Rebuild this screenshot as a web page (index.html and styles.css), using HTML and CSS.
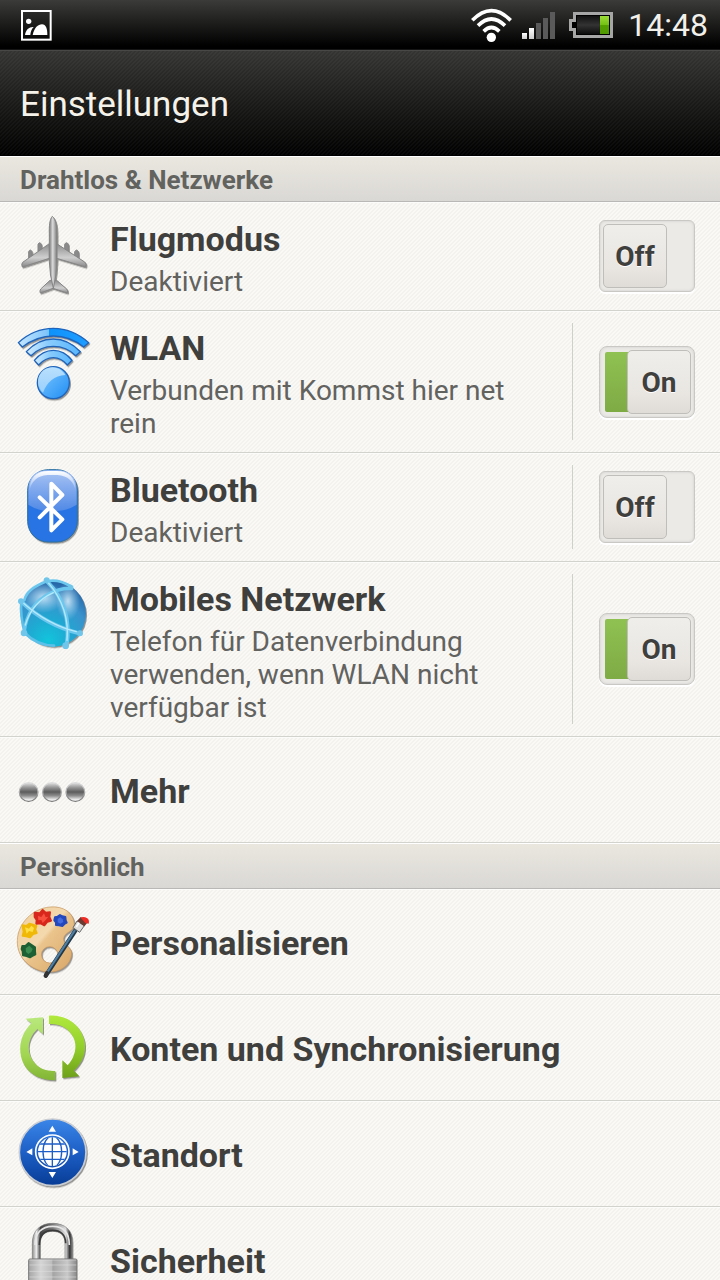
FILE: index.html
```html
<!DOCTYPE html>
<html lang="de">
<head>
  <meta charset="UTF-8">
  <meta name="viewport" content="width=device-width, initial-scale=1.0">
  <title>Einstellungen</title>
  <link rel="stylesheet" href="styles.css">
</head>
<body>
  <div class="status-bar">
    <svg class="status-picture" viewBox="0 0 96 96" aria-hidden="true">
      <rect x="6" y="6" width="86" height="86" fill="none" stroke="#fff" stroke-width="6"/>
      <circle cx="26" cy="37" r="8" fill="#fff"/>
      <path d="M15 78C17 62 28 53 41 54C34 61 32 69 31 78Z" fill="#fff"/>
      <path d="M38 78C43 56 54 46 66 46C78 47 82 58 82 78Z" fill="#fff"/>
    </svg>
    <div class="status-icons">
      <svg class="status-wifi" viewBox="30 24 132 108" aria-hidden="true">
        <g fill="none" stroke="#fff" stroke-width="11">
          <path d="M37 64Q94 6 152 64"/>
          <path d="M54 80Q94 40 135 80"/>
          <path d="M71 97Q94 74 118 97"/>
        </g>
        <circle cx="94" cy="115" r="14" fill="#fff"/>
      </svg>
      <svg class="status-signal" viewBox="186 36 99 90" aria-hidden="true">
        <defs>
          <linearGradient id="bar-on" x1="0" y1="0" x2="0" y2="1">
            <stop offset="0" stop-color="#fff"/>
            <stop offset="1" stop-color="#ccc"/>
          </linearGradient>
        </defs>
        <rect x="186" y="105" width="15" height="18" fill="url(#bar-on)"/>
        <rect x="207" y="90" width="15" height="33" fill="url(#bar-on)"/>
        <path d="M228 75h15v48h-15zM249 60h15v63h-15zM270 42h15v81h-15z" fill="#5a5a5a"/>
      </svg>
      <svg class="status-battery" viewBox="327 36 132 84" aria-hidden="true">
        <defs>
          <linearGradient id="battery-body" x1="0" y1="0" x2="0" y2="1">
            <stop offset="0" stop-color="#111"/>
            <stop offset=".5" stop-color="#333"/>
            <stop offset="1" stop-color="#0c0c0c"/>
          </linearGradient>
          <linearGradient id="battery-charge" x1="0" y1="0" x2="0" y2="1">
            <stop offset="0" stop-color="#9bdc38"/>
            <stop offset=".5" stop-color="#74c013"/>
            <stop offset=".5" stop-color="#55a100"/>
            <stop offset="1" stop-color="#4f9900"/>
          </linearGradient>
        </defs>
        <path d="M339 39H459V117H339V96H327V60H339Z" fill="#a6a6a6"/>
        <path d="M348 48H450V108H348V87H336V69H348Z" fill="#000"/>
        <rect x="351" y="51" width="69" height="54" fill="url(#battery-body)"/>
        <rect x="420" y="51" width="27" height="54" fill="url(#battery-charge)"/>
      </svg>
      <time class="clock">14:48</time>
    </div>
  </div>

  <header class="title-bar">
    <h1>Einstellungen</h1>
  </header>

  <main class="settings">
    <section>
      <h2 class="section-title">Drahtlos &amp; Netzwerke</h2>
      <ul class="list">
        <li class="row">
          <svg class="icon" viewBox="0 -9 330 315" aria-hidden="true">
            <defs>
              <linearGradient id="plane-body">
                <stop offset="0" stop-color="#777"/>
                <stop offset=".45" stop-color="#dcdcdc"/>
                <stop offset="1" stop-color="#777"/>
              </linearGradient>
              <linearGradient id="plane-wing" x1="0" y1="0" x2="0" y2="1">
                <stop offset="0" stop-color="#8c8c8c"/>
                <stop offset=".6" stop-color="#cfcfcf"/>
                <stop offset="1" stop-color="#888"/>
              </linearGradient>
            </defs>
            <g class="icon-shadow" stroke="#858585" stroke-width="3" stroke-linejoin="round">
              <path d="M86 160v-20q5-10 10 0v16zM114 140v-22q5-10 10 0v18zM194 136v-18q6-10 11 0v22zM224 156v-16q6-10 11 0v20z" fill="#8b8b8b"/>
              <path d="M148 116L68 172Q63 177 67 186L148 160ZM170 116L254 171Q261 176 257 186L170 160Z" fill="url(#plane-wing)"/>
              <path d="M150 226L122 252Q118 258 121 264L159 250L202 264Q205 257 200 252L170 226Z" fill="url(#plane-wing)"/>
              <path d="M157 34C168 44 171 62 171 90V170Q170 210 160 250Q149 210 148 170V90C147 62 149 43 157 34Z" fill="url(#plane-body)"/>
            </g>
          </svg>
          <a class="row-text" href="#flugmodus">
            <span class="row-title">Flugmodus</span>
            <span class="row-detail">Deaktiviert</span>
          </a>
          <div class="row-switch">
            <label class="switch">
              <input type="checkbox" role="switch" aria-label="Flugmodus">
              <span class="knob">Off</span>
            </label>
          </div>
        </li>

        <li class="row">
          <svg class="icon" viewBox="0 -12 330 315" aria-hidden="true">
            <defs>
              <linearGradient id="wlan-arc">
                <stop offset="0" stop-color="#c4e6ff"/>
                <stop offset=".43" stop-color="#7cc4fb"/>
                <stop offset=".43" stop-color="#0d92fb"/>
                <stop offset="1" stop-color="#1f9dff"/>
              </linearGradient>
              <linearGradient id="wlan-arc-light">
                <stop offset="0" stop-color="#d3ecff"/>
                <stop offset=".4" stop-color="#8accfc"/>
                <stop offset="1" stop-color="#58b6fc"/>
              </linearGradient>
              <linearGradient id="wlan-ball" x1="0" y1="0" x2="1" y2="1">
                <stop offset="0" stop-color="#8ccbfc"/>
                <stop offset=".4" stop-color="#5cb3fb"/>
                <stop offset="1" stop-color="#1f8df4"/>
              </linearGradient>
              <linearGradient id="wlan-gloss" x1="0" y1="0" x2="0" y2="1">
                <stop offset="0" stop-color="#b9dffd"/>
                <stop offset="1" stop-color="#9bd0fc"/>
              </linearGradient>
            </defs>
            <g class="icon-shadow" stroke="#1f64bb" stroke-width="4" stroke-linejoin="round">
              <path d="M55 83Q102 40 160 40Q218 40 266 83L251 96Q210 63 160 63Q111 63 67 96Z" fill="url(#wlan-arc)"/>
              <path d="M79 110Q114 72 160 72Q205 72 241 110L227 122Q200 94 160 94Q121 94 93 122Z" fill="url(#wlan-arc-light)"/>
              <path d="M103 136Q128 106 160 106Q193 106 216 136L202 150Q184 128 160 128Q136 128 116 150Z" fill="url(#wlan-arc-light)"/>
              <circle cx="160" cy="203" r="48" fill="url(#wlan-ball)"/>
            </g>
            <path d="M119 220A42 42 0 0 1 196 180Q147 184 129 233Q122 228 119 220Z" fill="url(#wlan-gloss)"/>
          </svg>
          <a class="row-text" href="#wlan">
            <span class="row-title">WLAN</span>
            <span class="row-detail">Verbunden mit Kommst hier net rein</span>
          </a>
          <div class="row-switch divided">
            <label class="switch">
              <input type="checkbox" role="switch" aria-label="WLAN" checked>
              <span class="knob">On</span>
            </label>
          </div>
        </li>

        <li class="row">
          <svg class="icon" viewBox="0 -21 330 315" aria-hidden="true">
            <defs>
              <linearGradient id="bt-gloss" x1="0" y1="0" x2="0" y2="1">
                <stop offset="0" stop-color="#a9c4f4"/>
                <stop offset="1" stop-color="#5089e6"/>
              </linearGradient>
              <linearGradient id="bt-rim" x1="0" y1="0" x2="0" y2="1">
                <stop offset="0" stop-color="#fff"/>
                <stop offset="1" stop-color="#fff" stop-opacity="0"/>
              </linearGradient>
            </defs>
            <rect class="icon-shadow" x="83" y="29" width="149" height="217" rx="62" fill="#2874e4" stroke="#2b6f9f" stroke-width="3"/>
            <path d="M85 90Q85 31 144 31H171Q230 31 230 90V134Q200 154 157 154Q115 154 85 134Z" fill="url(#bt-gloss)"/>
            <path d="M88 95Q88 33 145 33H170Q227 33 227 95Q219 48 172 45H143Q96 48 88 95Z" fill="url(#bt-rim)"/>
            <path d="M119 112L187 178L154 211V71L187 105L119 172" fill="none" stroke="#fff" stroke-width="12" stroke-linecap="round" stroke-linejoin="round"/>
          </svg>
          <a class="row-text" href="#bluetooth">
            <span class="row-title">Bluetooth</span>
            <span class="row-detail">Deaktiviert</span>
          </a>
          <div class="row-switch divided">
            <label class="switch">
              <input type="checkbox" role="switch" aria-label="Bluetooth">
              <span class="knob">Off</span>
            </label>
          </div>
        </li>

        <li class="row">
          <svg class="icon" viewBox="0 -9 330 315" aria-hidden="true">
            <defs>
              <radialGradient id="globe-fill" cx=".42" cy=".9" r=".9">
                <stop offset="0" stop-color="#12c4dc"/>
                <stop offset=".35" stop-color="#1fa9d2"/>
                <stop offset=".7" stop-color="#3a92cc"/>
                <stop offset="1" stop-color="#2563a5"/>
              </radialGradient>
              <radialGradient id="globe-gloss">
                <stop offset="0" stop-color="#e4f4fd"/>
                <stop offset="1" stop-color="#b4dff5" stop-opacity="0"/>
              </radialGradient>
            </defs>
            <circle class="icon-shadow" cx="160" cy="147" r="98" fill="url(#globe-fill)"/>
            <ellipse cx="130" cy="98" rx="62" ry="46" fill="url(#globe-gloss)" opacity=".8"/>
            <ellipse cx="204" cy="108" rx="36" ry="58" fill="url(#globe-gloss)" opacity=".8"/>
            <g fill="none" stroke="#6cc7ee" stroke-linecap="round">
              <path d="M73 106Q80 72 140 49Q175 41 211 63" stroke-width="8"/>
              <path d="M64 110Q60 150 74 204Q112 242 162 242" stroke-width="8" stroke="#5cc0e8"/>
              <path d="M72 204Q82 118 151 85Q183 68 215 71" stroke-width="10"/>
              <path d="M141 49Q217 125 200 240" stroke-width="12"/>
              <path d="M65 111Q139 181 238 205" stroke-width="12"/>
            </g>
            <g fill="none" stroke="#b6eafb" stroke-width="4" stroke-linecap="round">
              <path d="M144 52Q210 129 201 226"/>
              <path d="M69 113Q142 178 229 200"/>
              <path d="M76 180Q96 112 160 83"/>
            </g>
            <g fill="#6fc6ea">
              <circle cx="140" cy="46" r="9"/>
              <circle cx="63" cy="109" r="9"/>
              <circle cx="72" cy="204" r="10"/>
              <circle cx="197" cy="242" r="10"/>
              <circle cx="240" cy="205" r="9"/>
              <circle cx="212" cy="67" r="8"/>
            </g>
          </svg>
          <a class="row-text" href="#mobiles-netzwerk">
            <span class="row-title">Mobiles Netzwerk</span>
            <span class="row-detail">Telefon für Datenverbindung verwenden, wenn WLAN nicht verfügbar ist</span>
          </a>
          <div class="row-switch divided">
            <label class="switch">
              <input type="checkbox" role="switch" aria-label="Mobiles Netzwerk" checked>
              <span class="knob">On</span>
            </label>
          </div>
        </li>

        <li class="row">
          <svg class="icon" viewBox="0 -99 330 315" aria-hidden="true">
            <defs>
              <linearGradient id="dot" x1="0" y1="0" x2="0" y2="1">
                <stop offset="0" stop-color="#e4e4e4"/>
                <stop offset=".25" stop-color="#999"/>
                <stop offset=".5" stop-color="#5c5c5c"/>
                <stop offset=".7" stop-color="#8d8d8d"/>
                <stop offset=".95" stop-color="#fff"/>
              </linearGradient>
              <linearGradient id="dot-edge" x1="0" y1="0" x2="0" y2="1">
                <stop offset="0" stop-color="#ddd"/>
                <stop offset="1" stop-color="#777"/>
              </linearGradient>
            </defs>
            <g fill="url(#dot)" stroke="url(#dot-edge)" stroke-width="4">
              <circle cx="86" cy="66" r="28"/>
              <circle cx="156" cy="66" r="28"/>
              <circle cx="226" cy="66" r="28"/>
            </g>
          </svg>
          <a class="row-text" href="#mehr"><span class="row-title">Mehr</span></a>
        </li>
      </ul>
    </section>

    <section>
      <h2 class="section-title">Persönlich</h2>
      <ul class="list">
        <li class="row">
          <svg class="icon" viewBox="0 -18 330 315" aria-hidden="true">
            <defs>
              <linearGradient id="wood" x1="0" y1="0" x2="1" y2="1">
                <stop offset="0" stop-color="#efcf9c"/>
                <stop offset=".45" stop-color="#f4d9ae"/>
                <stop offset=".5" stop-color="#eac48c"/>
                <stop offset="1" stop-color="#d8a566"/>
              </linearGradient>
            </defs>
            <path class="icon-shadow" fill-rule="evenodd" d="M150 36C190 32 222 54 223 88C223 110 193 111 191 131C190 150 217 156 215 178C212 211 180 233 145 231C95 228 50 190 52 137C53 85 98 40 150 36ZM149 155A24 24 0 1 0 149 204A24 24 0 1 0 149 155Z" fill="url(#wood)" stroke="#c4935a" stroke-width="2"/>
            <g stroke-width="6" stroke-linejoin="round">
              <path d="M104 53L119 55L128 45L137 53L150 52L148 66L153 77L142 80L133 91L122 85L109 86L110 75L104 66Z" fill="#d8271c" stroke="#d8271c"/>
              <path d="M165 67L173 65L180 60L187 64L196 66L197 76L200 83L193 87L187 93L177 91L168 90L168 82L163 76Z" fill="#2448bd" stroke="#2448bd"/>
              <path d="M67 91L79 93L88 86L99 89L109 93L106 103L110 114L99 117L90 127L79 124L68 122L71 110Z" fill="#f0b908" stroke="#f0b908"/>
              <path d="M67 153L77 152L86 144L95 150L105 157L105 169L106 178L97 183L90 187L80 183L69 181L68 169L65 162Z" fill="#1d6034" stroke="#1d6034"/>
            </g>
            <path d="M114 63L124 66L132 55L137 67L145 65L137 75L128 84L124 75L115 76Z" fill="#f8503f"/>
            <path d="M173 72L181 67L188 73L190 81L181 86L173 82Z" fill="#456be0"/>
            <path d="M75 97L87 101L94 92L102 99L98 111L87 108L80 116Z" fill="#ffdf46"/>
            <path d="M77 160L88 152L98 162L94 171L85 177L78 171Z" fill="#3b8c50"/>
            <g stroke-linecap="round" fill="none">
              <path d="M138 241L226 107" stroke="#233746" stroke-width="13"/>
              <path d="M139 236L224 107" stroke="#4e7fa3" stroke-width="6"/>
              <path d="M137 243L141 234" stroke="#333" stroke-width="12"/>
            </g>
            <path d="M219 98L231 78L253 92L239 112Z" fill="#ddd" stroke="#666" stroke-width="3"/>
            <path d="M229 96L239 80" stroke="#fff" stroke-width="5"/>
            <path d="M231 78L242 66L264 81L253 94Z" fill="#6b3a31"/>
            <path d="M242 68Q250 63 262 70Q269 76 266 86L256 84Z" fill="#ee2b25"/>
          </svg>
          <a class="row-text" href="#personalisieren"><span class="row-title">Personalisieren</span></a>
        </li>

        <li class="row">
          <svg class="icon" viewBox="0 -15 330 315" aria-hidden="true">
            <defs>
              <linearGradient id="sync-left" x1="0" y1="0" x2="0" y2="1">
                <stop offset="0" stop-color="#b8e87c"/>
                <stop offset=".6" stop-color="#a2d551"/>
                <stop offset="1" stop-color="#82b435"/>
              </linearGradient>
              <linearGradient id="sync-right" x1="0" y1="0" x2="0" y2="1">
                <stop offset="0" stop-color="#b1e93c"/>
                <stop offset=".5" stop-color="#93cf2c"/>
                <stop offset="1" stop-color="#6ea01a"/>
              </linearGradient>
            </defs>
            <path class="icon-shadow" d="M77 56L129 52V103L112 87C80 118 78 160 105 190C120 208 143 214 166 213V241C126 242 92 226 73 196C50 153 60 104 94 70Z" fill="url(#sync-left)"/>
            <path class="icon-shadow" d="M147 47C199 44 241 74 253 120C260 153 250 186 222 212L238 229L187 234V181L203 196C225 171 233 138 220 112C207 86 182 70 147 72Z" fill="url(#sync-right)"/>
          </svg>
          <a class="row-text" href="#konten"><span class="row-title">Konten und Synchronisierung</span></a>
        </li>

        <li class="row">
          <svg class="icon" viewBox="0 -12 330 315" aria-hidden="true">
            <defs>
              <linearGradient id="compass" x1="0" y1="0" x2="0" y2="1">
                <stop offset="0" stop-color="#3b86e8"/>
                <stop offset=".5" stop-color="#1d5fc6"/>
                <stop offset="1" stop-color="#073c96"/>
              </linearGradient>
              <clipPath id="compass-globe"><circle cx="157" cy="140" r="43"/></clipPath>
            </defs>
            <circle class="icon-shadow" cx="158" cy="142" r="100" fill="url(#compass)" stroke="#c9ccd1" stroke-width="5"/>
            <path d="M157 62L168 80H146ZM157 219L146 201H168ZM79 141L97 130V151ZM236 141L218 130V151Z" fill="#fff"/>
            <circle cx="157" cy="140" r="50" fill="none" stroke="#fff" stroke-width="5"/>
            <circle cx="157" cy="140" r="43" fill="#fff"/>
            <g clip-path="url(#compass-globe)" fill="none" stroke="#1d5fc6" stroke-width="4">
              <path d="M157 94V186M110 140H204M110 117H204M110 163H204"/>
              <ellipse cx="157" cy="140" rx="28" ry="47"/>
            </g>
          </svg>
          <a class="row-text" href="#standort"><span class="row-title">Standort</span></a>
        </li>

        <li class="row">
          <svg class="icon" viewBox="0 21 330 315" aria-hidden="true">
            <defs>
              <linearGradient id="shackle">
                <stop offset="0" stop-color="#8d8d8d"/>
                <stop offset=".1" stop-color="#eee"/>
                <stop offset=".2" stop-color="#444"/>
                <stop offset=".5" stop-color="#777"/>
                <stop offset=".82" stop-color="#ddd"/>
                <stop offset=".92" stop-color="#333"/>
                <stop offset="1" stop-color="#999"/>
              </linearGradient>
              <linearGradient id="lock-body">
                <stop offset="0" stop-color="#a5a5a5"/>
                <stop offset=".25" stop-color="#d5d5d5"/>
                <stop offset=".48" stop-color="#bcbcbc"/>
                <stop offset=".5" stop-color="#a4a4a4"/>
                <stop offset=".8" stop-color="#c9c9c9"/>
                <stop offset="1" stop-color="#888"/>
              </linearGradient>
            </defs>
            <path d="M97 178V130C97 91 121 70 158 70C195 70 219 91 219 130V178H195V130C195 106 180 94 158 94C135 94 121 106 121 130V178Z" fill="url(#shackle)" stroke="#777" stroke-width="2"/>
            <path d="M105 135C105 100 124 79 158 79C190 79 208 98 208 135" fill="none" stroke="#e6e6e6" stroke-width="5"/>
            <path d="M118 135C118 105 133 91 158 91C181 91 197 104 197 130" fill="none" stroke="#3a3a3a" stroke-width="5"/>
            <rect x="86" y="177" width="145" height="130" rx="4" fill="url(#lock-body)" stroke="#777" stroke-width="3"/>
            <path d="M88 180H229M88 195H229M88 214H229M88 231H229M88 250H229" stroke="#e2e2e2" stroke-width="2" opacity=".8"/>
          </svg>
          <a class="row-text" href="#sicherheit"><span class="row-title">Sicherheit</span></a>
        </li>
      </ul>
    </section>
  </main>
</body>
</html>
```
FILE: styles.css
```css
* {
  box-sizing: border-box;
}
body {
  margin: 0;
  height: 100vh;
  display: flex;
  flex-direction: column;
  overflow: hidden;
  font-family: Roboto, "Noto Sans", sans-serif;
  color: #3f3f3d;
  background-color: #f8f7f3;
}

/* status bar */
.status-bar {
  flex: none;
  height: 50px;
  padding: 0 12px 0 20px;
  display: flex;
  align-items: center;
  justify-content: space-between;
  background: linear-gradient(#3b3b39, #000 94%);
  border-bottom: 1px solid #141414;
}
.status-picture {
  width: 32px;
  height: 32px;
}
.status-icons {
  display: flex;
  align-items: center;
}
.status-wifi {
  width: 44px;
  height: 36px;
  margin-right: 8px;
}
.status-signal {
  width: 33px;
  height: 30px;
  margin-right: 14px;
}
.status-battery {
  width: 44px;
  height: 28px;
}
.clock {
  margin-left: 15px;
  font-size: 32px;
  line-height: 50px;
  color: #f2f0ea;
}

/* title bar */
.title-bar {
  flex: none;
  height: 106px;
  padding: 2px 20px 0;
  display: flex;
  align-items: center;
  border-top: 1px solid #484846;
  border-bottom: 1px solid #000;
  background:
    linear-gradient(135deg, rgba(255, 255, 255, .03) 25%, transparent 25%, transparent 50%, rgba(255, 255, 255, .03) 50%, rgba(255, 255, 255, .03) 75%, transparent 75%) 0 0 / 4px 4px,
    linear-gradient(#343432, #000);
}
.title-bar h1 {
  margin: 0;
  font-size: 35px;
  font-weight: 400;
  color: #f5f2ea;
}

/* list */
.settings {
  flex: 1;
  min-height: 0;
  overflow-y: auto;
  scrollbar-width: none;
}
.section-title {
  margin: 0;
  padding: 0 20px;
  height: 46px;
  font-size: 26px;
  line-height: 47px;
  font-weight: 700;
  color: #62625f;
  border-top: 1px solid #fff;
  border-bottom: 1px solid #b9b8b6;
  background: linear-gradient(#eae7df, #dad8d5);
}
.list {
  margin: 0;
  padding: 0;
  list-style: none;
}
.row {
  display: flex;
  min-height: 106px;
  border-bottom: 1px solid #d3d3cd;
  background: linear-gradient(135deg, #f3f2ee 25%, #faf9f6 25%, #faf9f6 50%, #f3f2ee 50%, #f3f2ee 75%, #faf9f6 75%) 0 0 / 4px 4px;
  box-shadow: inset 0 1px #fcfcfa;
}
.icon {
  flex: none;
  width: 110px;
  height: 105px;
}
.icon-shadow {
  filter: drop-shadow(3px 4px 2px rgba(0, 0, 0, .4));
}
.row-text {
  flex: 1;
  min-width: 0;
  padding: 14px 40px 12px 0;
  display: flex;
  flex-direction: column;
  justify-content: center;
  color: inherit;
  text-decoration: none;
}
.row-title {
  font-size: 34px;
  line-height: 46px;
  font-weight: 700;
}
.row-detail {
  margin-top: 3px;
  font-size: 28px;
  line-height: 33px;
  color: #62625f;
}

/* switches */
.row-switch {
  flex: none;
  width: 148px;
  margin: 12px 0;
  padding-left: 26px;
  display: flex;
  align-items: center;
  border-left: 1px solid transparent;
}
.row-switch.divided {
  border-left-color: #d0d0ca;
}
.switch {
  display: grid;
  align-items: center;
  cursor: pointer;
}
.switch input {
  grid-area: 1 / 1;
  appearance: none;
  width: 96px;
  height: 72px;
  margin: 0;
  border: 1px solid #c9c8c4;
  border-radius: 6px;
  background: #ebeae7;
  box-shadow: inset 0 0 3px rgba(0, 0, 0, .12), 0 2px #fff;
  cursor: pointer;
}
.switch input:checked {
  border-radius: 8px;
  padding: 5px;
  background: linear-gradient(#8fc152, #7fab45) content-box, #ebeae7;
}
.knob {
  grid-area: 1 / 1;
  justify-self: start;
  width: 64px;
  height: 64px;
  margin: 0 4px;
  border: 1px solid #bfbeba;
  border-radius: 5px;
  background: linear-gradient(#efeeea, #e9e6e2 70%, #dfdbd7);
  font-size: 28px;
  line-height: 64px;
  font-weight: 700;
  text-align: center;
  text-shadow: 0 1px #fff;
}
.switch input:checked + .knob {
  justify-self: end;
}
```
